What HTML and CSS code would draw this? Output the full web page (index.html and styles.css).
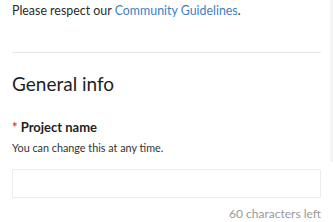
FILE: index.html
```html
<!DOCTYPE html>
<html>
<head>
<meta charset="utf-8">
<link rel="stylesheet" href="styles.css">
</head>
<body>
<div class="page">
  <main class="content">
    <p class="notice">Please respect our <a class="link" href="#">Community Guidelines</a>.</p>
    <hr class="divider">
    <h2 class="section-title">General info</h2>
    <div class="field">
      <label class="field-label"><span class="required">*</span> Project name</label>
      <p class="field-help">You can change this at any time.</p>
      <input class="field-input" type="text">
      <div class="field-count">60 characters left</div>
    </div>
  </main>
  <div class="scrollbar"></div>
</div>
</body>
</html>
```
FILE: styles.css
```css
html, body {
  margin: 0;
  padding: 0;
  background: #fff;
}
body {
  font-family: Lato, "Noto Sans", sans-serif;
  color: #2b2b2b;
}
.page {
  display: flex;
  width: 333px;
  height: 222px;
  overflow: hidden;
}
.content {
  flex: 1;
  padding: 0 9px 0 12px;
}
.scrollbar {
  width: 3px;
  height: 162px;
  background: #f4f4f4;
}
.notice {
  margin: 2px 0 0;
  font-size: 12.4px;
  line-height: 18px;
}
.link {
  color: #3d7fc0;
  text-decoration: none;
}
.divider {
  margin: 32px 0 0;
  border: 0;
  border-top: 1px solid #e6e6e6;
}
.section-title {
  margin: 18px 0 0;
  font-size: 19px;
  font-weight: 400;
  line-height: 26px;
  color: #1f1f1f;
}
.field {
  margin-top: 21px;
}
.field-label {
  display: block;
  font-size: 13px;
  font-weight: 700;
  line-height: 18px;
  color: #1f1f1f;
}
.required {
  color: #d8403a;
}
.field-help {
  margin: 5px 0 0;
  font-size: 10.8px;
  line-height: 14px;
  color: #333;
}
.field-input {
  display: block;
  box-sizing: border-box;
  width: 100%;
  height: 29px;
  margin: 14px 0 0;
  border: 1px solid #ececec;
  border-radius: 1px;
  outline: none;
}
.field-count {
  margin-top: 8px;
  text-align: right;
  font-size: 12px;
  line-height: 16px;
  color: #9a9a9a;
}
```
